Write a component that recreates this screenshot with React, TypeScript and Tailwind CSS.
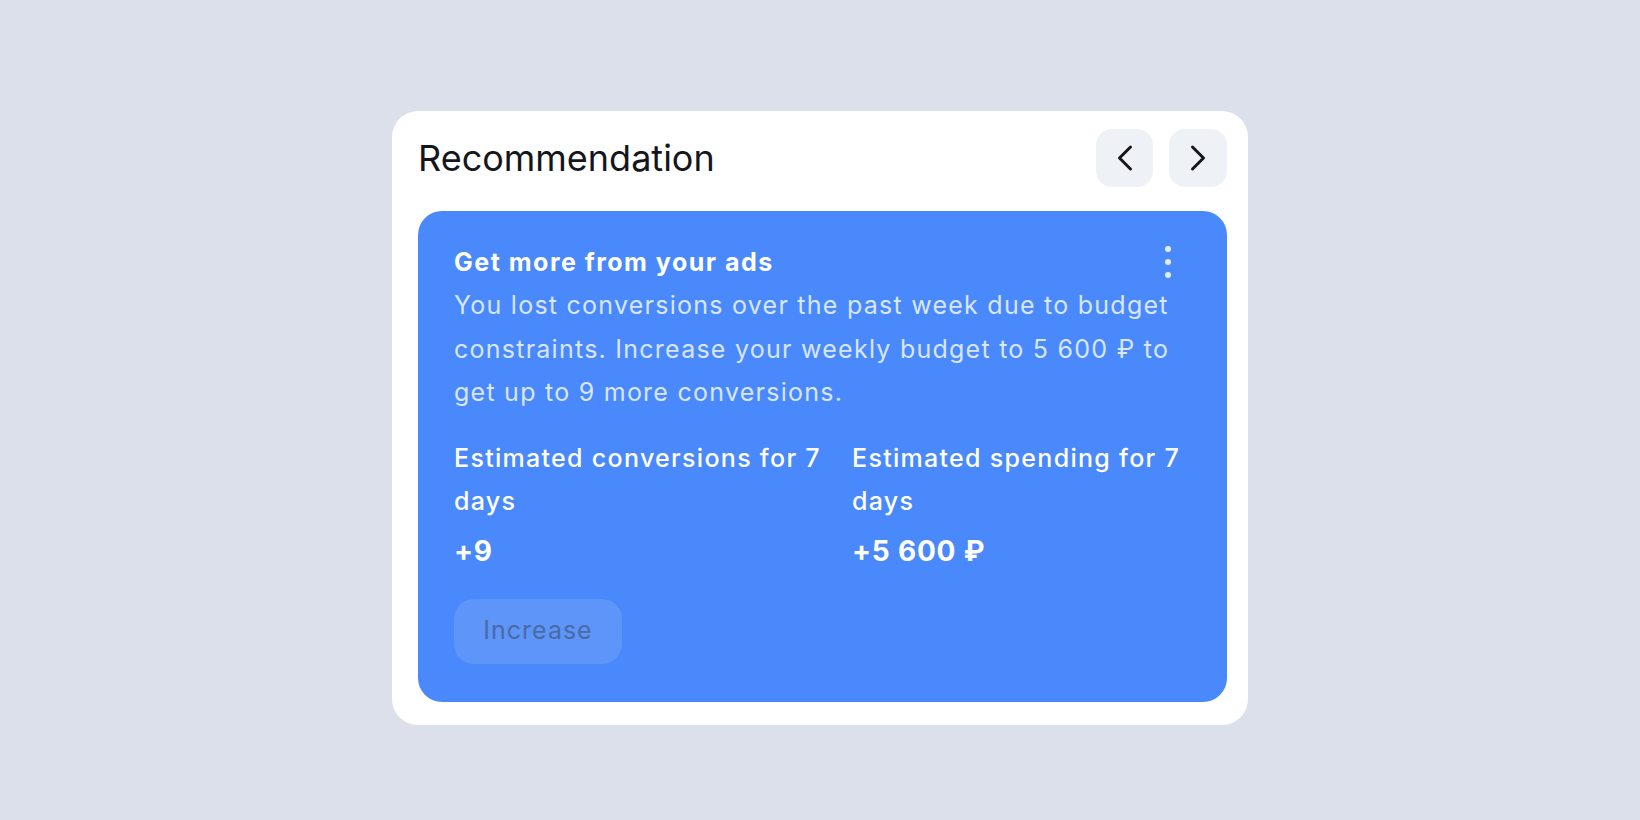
import React from "react";

function Chevron({ dir }: { dir: "left" | "right" }) {
  return (
    <svg width="18" height="28" viewBox="0 0 18 28" fill="none">
      <path
        d={dir === "left" ? "M14.5 3 L3.5 14 L14.5 25" : "M3.5 3 L14.5 14 L3.5 25"}
        stroke="#15171c"
        strokeWidth="3"
        strokeLinecap="round"
        strokeLinejoin="round"
      />
    </svg>
  );
}

export default function App() {
  return (
    <div
      className="w-[1640px] h-[820px] bg-[#dbe0ea] pl-[392px] pt-[111px]"
      style={{ fontFamily: "Inter, 'Noto Sans', sans-serif" }}
    >
      <div className="w-[856px] h-[614px] bg-white rounded-[26px] pl-[26px] pr-[21px] pt-[18px] flex flex-col">
        <div className="flex items-center justify-between h-[58px]">
          <div className="text-[36px] leading-[40px] text-[#14161c]">Recommendation</div>
          <div className="flex gap-[16px]">
            <button className="w-[57px] h-[58px] rounded-[16px] bg-[#eef1f5] flex items-center justify-center">
              <Chevron dir="left" />
            </button>
            <button className="w-[58px] h-[58px] rounded-[16px] bg-[#eef1f5] flex items-center justify-center">
              <Chevron dir="right" />
            </button>
          </div>
        </div>
        <div className="relative mt-[24px] w-[809px] h-[491px] rounded-[24px] bg-[#4a89fc] pl-[36px] pt-[29px] flex flex-col">
          <div className="absolute right-[56px] top-[35px] flex flex-col gap-[7px]">
            <div className="w-[6px] h-[6px] rounded-full bg-[#e3ecfe]" />
            <div className="w-[6px] h-[6px] rounded-full bg-[#e3ecfe]" />
            <div className="w-[6px] h-[6px] rounded-full bg-[#e3ecfe]" />
          </div>
          <div className="text-[25px] leading-[44px] font-bold text-white tracking-[1.5px]">Get more from your ads</div>
          <div className="text-[25px] leading-[43.5px] text-[#d8e6fe] w-[735px] tracking-[1.25px]">
            You lost conversions over the past week due to budget constraints. Increase your weekly budget to 5 600 ₽ to get up to 9 more conversions.
          </div>
          <div className="flex mt-[22px]">
            <div className="w-[398px]">
              <div className="text-[25px] leading-[43.5px] font-medium text-white tracking-[1.3px]">Estimated conversions for 7 days</div>
              <div className="mt-[7px] text-[28px] leading-[40px] font-bold text-white tracking-[0.8px]">+9</div>
            </div>
            <div className="w-[340px]">
              <div className="text-[25px] leading-[43.5px] font-medium text-white tracking-[1.3px]">Estimated spending for 7 days</div>
              <div className="mt-[7px] text-[28px] leading-[40px] font-bold text-white tracking-[0.8px]">+5 600 ₽</div>
            </div>
          </div>
          <button className="mt-[28px] w-[168px] h-[65px] rounded-[20px] bg-[#5e95f8] text-[25px] text-[#4a6aa6] tracking-[1px] flex items-center justify-center">
            Increase
          </button>
        </div>
      </div>
    </div>
  );
}
